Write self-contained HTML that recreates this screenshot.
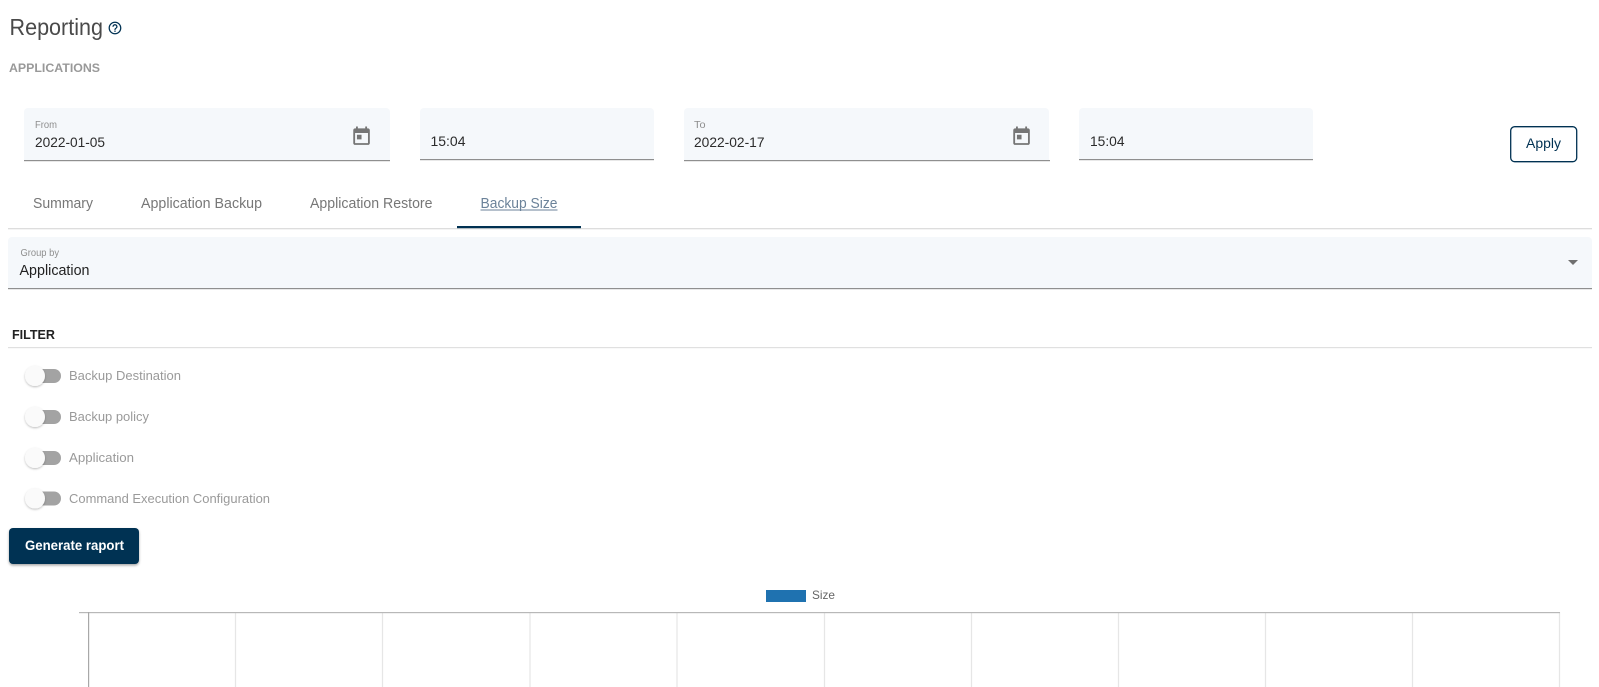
<!DOCTYPE html>
<html><head><meta charset="utf-8"><title>Reporting</title>
<style>
html,body{margin:0;padding:0;background:#fff;width:1599px;height:687px;overflow:hidden}
svg{display:block;font-family:"Liberation Sans",sans-serif}
.lab{font-size:10px;fill:#8e8e8e}
.val{font-size:14px;fill:#2b2b2b}
.tab{font-size:14.5px;fill:#777}
.tog{font-size:13px;fill:#9a9a9a}
.g{stroke:#e6e6e6;stroke-width:1.2}
</style></head><body>
<svg width="1599" height="687" viewBox="0 0 1599 687" xmlns="http://www.w3.org/2000/svg">
<defs><filter id="s" x="-30%" y="-30%" width="160%" height="170%"><feDropShadow dx="0" dy="1" stdDeviation="1" flood-color="#000" flood-opacity=".26"/></filter>
<filter id="b" x="-5%" y="-20%" width="110%" height="150%"><feDropShadow dx="0" dy="1.5" stdDeviation="1.2" flood-color="#000" flood-opacity=".35"/></filter></defs>

<text x="9.5" y="35" font-size="23" fill="#4a4a4a" textLength="93.5" lengthAdjust="spacingAndGlyphs">Reporting</text>
<path transform="translate(107.3 20.3) scale(.64)" fill="#003152" d="M11 18h2v-2h-2v2zm1-16C6.48 2 2 6.48 2 12s4.48 10 10 10 10-4.48 10-10S17.52 2 12 2zm0 18c-4.41 0-8-3.59-8-8s3.59-8 8-8 8 3.59 8 8-3.59 8-8 8zm0-14c-2.21 0-4 1.79-4 4h2c0-1.1.9-2 2-2s2 .9 2 2c0 2-3 1.75-3 5h2c0-2.25 3-2.5 3-5 0-2.21-1.79-4-4-4z"/>
<text x="9" y="72" font-size="11.5" font-weight="bold" fill="#999" textLength="91" lengthAdjust="spacingAndGlyphs">APPLICATIONS</text>

<path d="M24 160V112a4 4 0 0 1 4-4H386a4 4 0 0 1 4 4V160Z" fill="#f5f8fb"/><rect x="24" y="160" width="366" height="1.2" fill="#8f8f8f"/>
<path d="M420 159V112a4 4 0 0 1 4-4H650a4 4 0 0 1 4 4V159Z" fill="#f5f8fb"/><rect x="420" y="159" width="234" height="1.2" fill="#8f8f8f"/>
<path d="M684 160V112a4 4 0 0 1 4-4H1045a4 4 0 0 1 4 4V160Z" fill="#f5f8fb"/><rect x="684" y="160" width="366" height="1.2" fill="#8f8f8f"/>
<path d="M1079 159V112a4 4 0 0 1 4-4H1309a4 4 0 0 1 4 4V159Z" fill="#f5f8fb"/><rect x="1079" y="159" width="234" height="1.2" fill="#8f8f8f"/>

<text class="lab" x="35" y="128" textLength="22" lengthAdjust="spacingAndGlyphs">From</text>
<text class="val" x="35" y="147" textLength="70" lengthAdjust="spacingAndGlyphs">2022-01-05</text>
<path transform="translate(350.5 125.6) scale(.92)" fill="#757575" d="M19 3h-1V1h-2v2H8V1H6v2H5c-1.11 0-1.99.9-1.99 2L3 19c0 1.1.89 2 2 2h14c1.1 0 2-.9 2-2V5c0-1.1-.9-2-2-2zm0 16H5V8h14v11zM7 10h5v5H7z"/>
<text class="val" x="430.5" y="146" textLength="35" lengthAdjust="spacingAndGlyphs">15:04</text>
<text class="lab" x="694" y="128" textLength="11.5" lengthAdjust="spacingAndGlyphs">To</text>
<text class="val" x="694" y="147" textLength="70.5" lengthAdjust="spacingAndGlyphs">2022-02-17</text>
<path transform="translate(1010.5 125.6) scale(.92)" fill="#757575" d="M19 3h-1V1h-2v2H8V1H6v2H5c-1.11 0-1.99.9-1.99 2L3 19c0 1.1.89 2 2 2h14c1.1 0 2-.9 2-2V5c0-1.1-.9-2-2-2zm0 16H5V8h14v11zM7 10h5v5H7z"/>
<text class="val" x="1090" y="146" textLength="34.5" lengthAdjust="spacingAndGlyphs">15:04</text>

<rect x="1510.7" y="126.7" width="66" height="35" rx="4" fill="#fff" stroke="#003152" stroke-width="1.3"/>
<text x="1526" y="148" font-size="14" fill="#003152" textLength="35" lengthAdjust="spacingAndGlyphs">Apply</text>

<text class="tab" x="33" y="208" textLength="60" lengthAdjust="spacingAndGlyphs">Summary</text>
<text class="tab" x="141" y="208" textLength="121" lengthAdjust="spacingAndGlyphs">Application Backup</text>
<text class="tab" x="310" y="208" textLength="122.5" lengthAdjust="spacingAndGlyphs">Application Restore</text>
<text x="480.5" y="208" font-size="14.5" fill="#6b8299" textLength="77" lengthAdjust="spacingAndGlyphs">Backup Size</text>
<rect x="480.5" y="209.5" width="77" height="1" fill="#6b8299"/>
<rect x="8" y="228" width="1584" height="1.3" fill="#ddd"/>
<rect x="457" y="226" width="124" height="2.2" fill="#003152"/>

<path d="M8 288V241a4 4 0 0 1 4-4H1588a4 4 0 0 1 4 4V288Z" fill="#f5f8fb"/>
<rect x="8" y="288" width="1584" height="1.2" fill="#8f8f8f"/>
<text class="lab" x="20.5" y="256" textLength="38.5" lengthAdjust="spacingAndGlyphs">Group by</text>
<text x="19.5" y="275" font-size="15" fill="#222" textLength="70" lengthAdjust="spacingAndGlyphs">Application</text>
<path d="M1568 260h10l-5 5z" fill="#6f6f6f"/>

<text x="12" y="339" font-size="13" font-weight="bold" fill="#222" textLength="43" lengthAdjust="spacingAndGlyphs">FILTER</text>
<rect x="8" y="347" width="1584" height="1.2" fill="#e0e0e0"/>

<rect x="27" y="369" width="34" height="14" rx="7" fill="#a3a3a3"/><circle cx="35" cy="376" r="10" fill="#fafafa" filter="url(#s)"/>
<text class="tog" x="69" y="380" textLength="112" lengthAdjust="spacingAndGlyphs">Backup Destination</text>
<rect x="27" y="410" width="34" height="14" rx="7" fill="#a3a3a3"/><circle cx="35" cy="417" r="10" fill="#fafafa" filter="url(#s)"/>
<text class="tog" x="69" y="421" textLength="80" lengthAdjust="spacingAndGlyphs">Backup policy</text>
<rect x="27" y="451" width="34" height="14" rx="7" fill="#a3a3a3"/><circle cx="35" cy="458" r="10" fill="#fafafa" filter="url(#s)"/>
<text class="tog" x="69" y="462" textLength="65" lengthAdjust="spacingAndGlyphs">Application</text>
<rect x="27" y="491.5" width="34" height="14" rx="7" fill="#a3a3a3"/><circle cx="35" cy="498.5" r="10" fill="#fafafa" filter="url(#s)"/>
<text class="tog" x="69" y="503" textLength="201" lengthAdjust="spacingAndGlyphs">Command Execution Configuration</text>

<rect x="9" y="528" width="130" height="36" rx="4" fill="#003152" filter="url(#b)"/>
<text x="25" y="550" font-size="14" font-weight="bold" fill="#fff" textLength="99" lengthAdjust="spacingAndGlyphs">Generate raport</text>

<rect x="766" y="590" width="40" height="12" fill="#1f72b0"/>
<text x="812" y="599" font-size="12" fill="#666" textLength="23" lengthAdjust="spacingAndGlyphs">Size</text>

<g class="g">
<path d="M235.5 612V687M382.5 612V687M530 612V687M677 612V687M824.5 612V687M971.5 612V687M1118.5 612V687M1265.5 612V687M1412.5 612V687M1559.5 612V687"/>
</g>
<rect x="79" y="612" width="1481" height="1.2" fill="#b8b8b8"/>
<rect x="88" y="612" width="1.2" height="75" fill="#a8a8a8"/>
</svg>
</body></html>
